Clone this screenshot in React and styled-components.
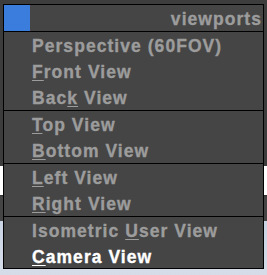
import React from 'react'
import styled, { createGlobalStyle } from 'styled-components'

const GlobalStyle = createGlobalStyle`
  html, body {
    margin: 0;
    padding: 0;
  }
  body {
    width: 267px;
    height: 275px;
    overflow: hidden;
    background: linear-gradient(
      to bottom,
      #3d3d3d 0px,
      #3d3d3d 166px,
      #ffffff 166px,
      #ffffff 195px,
      #2e2e2e 195px,
      #454545 197px,
      #454545 221px,
      #c9d3e3 221px,
      #d6dde9 275px
    );
    font-family: "Liberation Sans", Arial, sans-serif;
  }
`

const Backdrop = styled.div`
  padding: 4px 0 0 3px;
`

const Menu = styled.div`
  width: 259px;
  background: #454545;
  border: 1px solid #000;
  font-size: 17.5px;
  font-weight: bold;
  letter-spacing: 1.05px;
  -webkit-text-stroke: 0.35px currentColor;
  color: #9c9c9c;
`

const Header = styled.div`
  display: flex;
  align-items: center;
  height: 26px;
  border-bottom: 1px solid #000;
`

const Swatch = styled.div`
  width: 26px;
  height: 26px;
  background: #3b7ddd;
`

const Title = styled.div`
  flex: 1;
  text-align: right;
  padding: 2px 1px 0 0;
  line-height: 24px;
`

const Section = styled.div`
  & + & {
    border-top: 1px solid #000;
  }
`

const Item = styled.div`
  height: 26px;
  box-sizing: border-box;
  padding: 2px 0 0 28px;
  line-height: 24px;
  white-space: nowrap;
  color: ${p => (p.$active ? '#ffffff' : '#9c9c9c')};

  ${Section}:last-child &:last-child {
    height: 25px;
  }
`

const Key = styled.span`
  text-decoration: underline;
  text-decoration-thickness: 1px;
  text-underline-offset: 2px;
`

const sections = [
  [
    ['Perspective (60FOV)', -1],
    ['Front View', 0],
    ['Back View', 3]
  ],
  [
    ['Top View', 0],
    ['Bottom View', 0]
  ],
  [
    ['Left View', 0],
    ['Right View', 0]
  ],
  [
    ['Isometric User View', 10],
    ['Camera View', 0, true]
  ]
]

function Label({ text, at }) {
  if (at < 0) return text
  return (
    <>
      {text.slice(0, at)}
      <Key>{text[at]}</Key>
      {text.slice(at + 1)}
    </>
  )
}

export default function App() {
  return (
    <>
      <GlobalStyle />
      <Backdrop>
        <Menu>
          <Header>
            <Swatch />
            <Title>viewports</Title>
          </Header>
          {sections.map((items, i) => (
            <Section key={i}>
              {items.map(([text, at, active]) => (
                <Item key={text} $active={active}>
                  <Label text={text} at={at} />
                </Item>
              ))}
            </Section>
          ))}
        </Menu>
      </Backdrop>
    </>
  )
}
